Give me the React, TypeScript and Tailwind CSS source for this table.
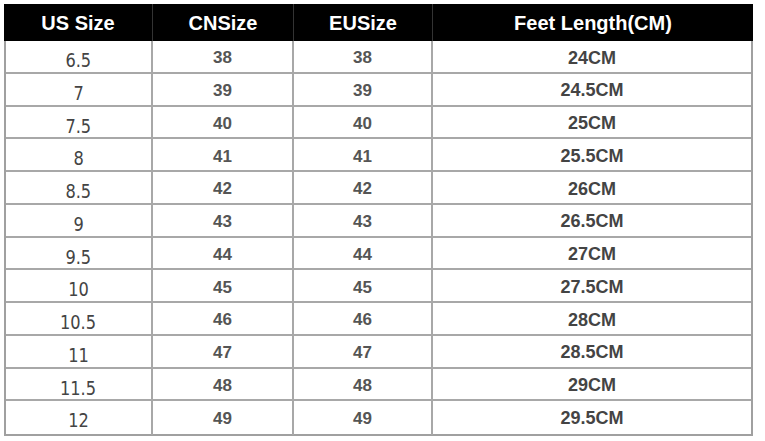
const rows: [string, string, string, string][] = [
  ["6.5", "38", "38", "24CM"],
  ["7", "39", "39", "24.5CM"],
  ["7.5", "40", "40", "25CM"],
  ["8", "41", "41", "25.5CM"],
  ["8.5", "42", "42", "26CM"],
  ["9", "43", "43", "26.5CM"],
  ["9.5", "44", "44", "27CM"],
  ["10", "45", "45", "27.5CM"],
  ["10.5", "46", "46", "28CM"],
  ["11", "47", "47", "28.5CM"],
  ["11.5", "48", "48", "29CM"],
  ["12", "49", "49", "29.5CM"],
];

const headers = ["US Size", "CNSize", "EUSize", "Feet Length(CM)"];

export default function App() {
  return (
    <div className="w-[765px] h-[441px] bg-white pt-[4px] pl-[4px]">
      <div className="w-[749px] font-['Liberation_Sans',Arial,sans-serif]">
        {/* header */}
        <div className="grid grid-cols-[149px_141px_139px_1fr] h-[37px] bg-black text-white font-bold text-[20px]">
          {headers.map((h, i) => (
            <div
              key={h}
              className={`flex items-center justify-center ${i < 3 ? "border-r border-[#333]" : ""}`}
            >
              {h}
            </div>
          ))}
        </div>
        {/* body */}
        <div className="border-x-2 border-b-2 border-[#a0a0a0]">
          {rows.map((r, ri) => (
            <div
              key={ri}
              className={`grid grid-cols-[147px_141px_139px_1fr] h-[32.75px] ${ri < rows.length - 1 ? "border-b-2 border-[#a8a8a8]" : ""}`}
            >
              <div className="flex items-center justify-center pt-[4px] border-r-2 border-[#a8a8a8] text-[#444] text-[20px] font-['DejaVu_Sans_Condensed','DejaVu_Sans',sans-serif]">
                <span className="inline-block scale-x-90">{r[0]}</span>
              </div>
              <div className="flex items-center justify-center border-r-2 border-[#a8a8a8] text-[#555] text-[17px] font-semibold">
                {r[1]}
              </div>
              <div className="flex items-center justify-center border-r-2 border-[#a8a8a8] text-[#555] text-[17px] font-semibold">
                {r[2]}
              </div>
              <div className="flex items-center justify-center text-[#444] text-[18px] font-bold">
                {r[3]}
              </div>
            </div>
          ))}
        </div>
      </div>
    </div>
  );
}
